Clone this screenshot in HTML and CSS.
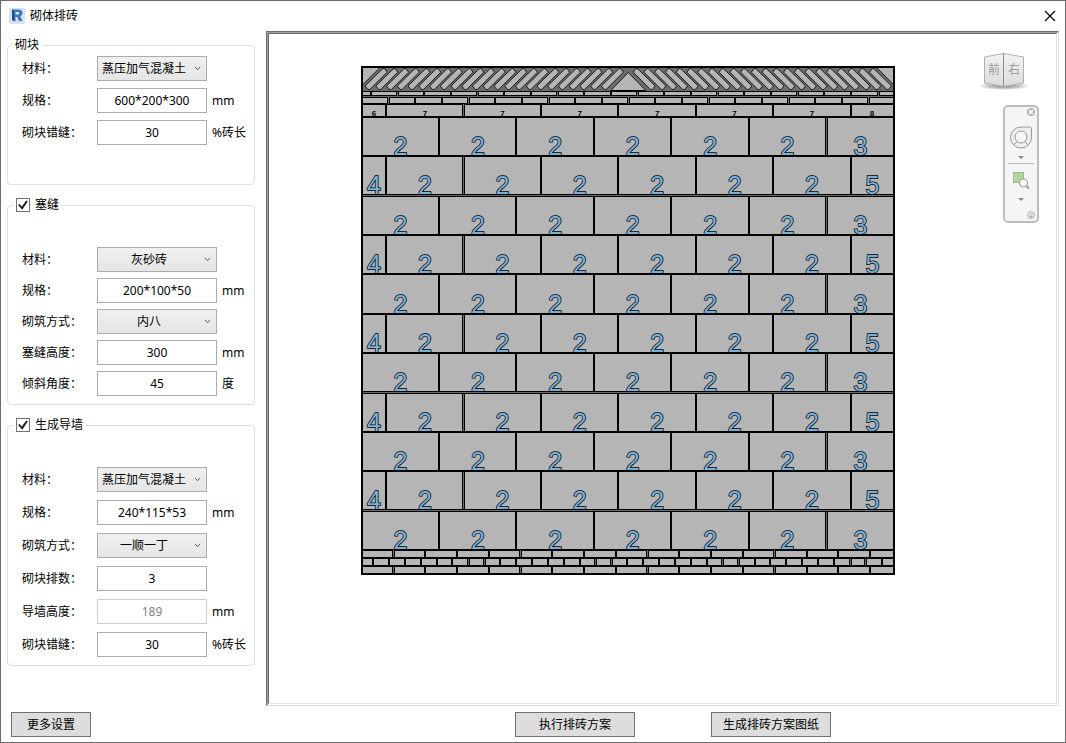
FILE: index.html
```html
<!DOCTYPE html>
<html lang="zh-CN">
<head>
<meta charset="utf-8">
<title>砌体排砖</title>
<link rel="stylesheet" href="styles.css">
</head>
<body>
<div class="window">
  <header class="titlebar">
    <svg class="app-icon" viewBox="0 0 16 16" aria-hidden="true">
      <rect width="16" height="16" rx="1" fill="#d3e3f3"/>
      <path d="M3 1.500h6.500c2.600 0 3.900 1.200 3.900 3.500 0 1.700-.8 2.800-2.200 3.300L13.500 13H10L8.200 9H6.500v4.500L3 12z" fill="#3d76b5"/>
      <path d="M3 1.500l2.200 1.300V13L3 12z" fill="#1f4b86"/>
      <path d="M6.500 4h2.400c.9 0 1.300.4 1.300 1.200S9.800 6.500 8.900 6.500H6.500z" fill="#d3e3f3"/>
    </svg>
    <h1 class="title">砌体排砖</h1>
    <button class="close" type="button" aria-label="关闭">
      <svg viewBox="0 0 12 12"><path d="M1 1l10 10M11 1L1 11" stroke="#000" stroke-width="1.2" fill="none"/></svg>
    </button>
  </header>

  <main class="main">
    <form class="sidebar">
      <fieldset class="group group-block">
        <legend>砌块</legend>
        <div class="row">
          <label for="b-mat">材料：</label>
          <span class="combo"><select id="b-mat"><option>蒸压加气混凝土</option></select><svg viewBox="0 0 7 5"><path d="M1 .8l2.500 3L6 .8"/></svg></span>
        </div>
        <div class="row">
          <label for="b-spec">规格：</label><input id="b-spec" type="text" value="600*200*300"><span class="unit">mm</span>
        </div>
        <div class="row">
          <label for="b-off">砌块错缝：</label><input id="b-off" type="text" value="30"><span class="unit">%砖长</span>
        </div>
      </fieldset>

      <fieldset class="group group-gap">
        <legend><label class="check"><input type="checkbox" checked>塞缝</label></legend>
        <div class="row">
          <label for="g-mat">材料：</label>
          <span class="combo"><select id="g-mat"><option>灰砂砖</option></select><svg viewBox="0 0 7 5"><path d="M1 .8l2.500 3L6 .8"/></svg></span>
        </div>
        <div class="row">
          <label for="g-spec">规格：</label><input id="g-spec" type="text" value="200*100*50"><span class="unit">mm</span>
        </div>
        <div class="row">
          <label for="g-way">砌筑方式：</label>
          <span class="combo"><select id="g-way"><option>内八</option></select><svg viewBox="0 0 7 5"><path d="M1 .8l2.500 3L6 .8"/></svg></span>
        </div>
        <div class="row">
          <label for="g-h">塞缝高度：</label><input id="g-h" type="text" value="300"><span class="unit">mm</span>
        </div>
        <div class="row">
          <label for="g-a">倾斜角度：</label><input id="g-a" type="text" value="45"><span class="unit">度</span>
        </div>
      </fieldset>

      <fieldset class="group group-base">
        <legend><label class="check"><input type="checkbox" checked>生成导墙</label></legend>
        <div class="row">
          <label for="w-mat">材料：</label>
          <span class="combo"><select id="w-mat"><option>蒸压加气混凝土</option></select><svg viewBox="0 0 7 5"><path d="M1 .8l2.500 3L6 .8"/></svg></span>
        </div>
        <div class="row">
          <label for="w-spec">规格：</label><input id="w-spec" type="text" value="240*115*53"><span class="unit">mm</span>
        </div>
        <div class="row">
          <label for="w-way">砌筑方式：</label>
          <span class="combo"><select id="w-way"><option>一顺一丁</option></select><svg viewBox="0 0 7 5"><path d="M1 .8l2.500 3L6 .8"/></svg></span>
        </div>
        <div class="row">
          <label for="w-n">砌块排数：</label><input id="w-n" type="text" value="3">
        </div>
        <div class="row">
          <label for="w-h">导墙高度：</label><input id="w-h" type="text" value="189" disabled><span class="unit">mm</span>
        </div>
        <div class="row">
          <label for="w-off">砌块错缝：</label><input id="w-off" type="text" value="30"><span class="unit">%砖长</span>
        </div>
      </fieldset>
    </form>

    <section class="viewport">
      <div class="canvas">
        <svg class="wall" id="wall" viewBox="361 66 534 509" role="img" aria-label="排砖立面"></svg>
        <div class="tools">
          <svg class="cube" viewBox="0 0 52 40" role="img" aria-label="视图方位">
            <defs>
              <linearGradient id="face" x1="0" y1="0" x2="0" y2="1"><stop offset="0" stop-color="#f2f2f2"/><stop offset="1" stop-color="#dcdcdc"/></linearGradient>
              <radialGradient id="shade"><stop offset="0" stop-color="#888"/><stop offset=".6" stop-color="#c4c4c4"/><stop offset="1" stop-color="#fff"/></radialGradient>
            </defs>
            <ellipse cx="26" cy="34" rx="26" ry="4" fill="url(#shade)"/>
            <path d="M6.500 5l19-3.500v33L6.500 31z" fill="url(#face)" stroke="#b0b0b0"/>
            <path d="M45.500 5l-20-3.500v33l20-3.500z" fill="url(#face)" stroke="#b0b0b0"/>
            <path d="M25.500 1.500v33" stroke="#8c8c8c"/>
            <text x="10" y="22">前</text><text x="30" y="22">右</text>
          </svg>
          <svg class="navbar" viewBox="0 0 36 118" role="img" aria-label="导航栏">
            <rect x="1" y="1" width="34" height="116" rx="4" fill="#f5f5f5" stroke="#bdbdbd" stroke-width="2"/>
            <circle cx="28" cy="7" r="4" fill="#b4b4b4"/>
            <path d="M26 5l4 4M30 5l-4 4" stroke="#fff" stroke-width="1.200"/>
            <path d="M18 22h8.500q2 0 2 2v8.500a10.500 10.500 0 1 1-10.500-10.500z" fill="#eceef2" stroke="#999"/>
            <circle cx="18" cy="32" r="6" fill="#f6f6f6" stroke="#999"/>
            <path d="M11.500 39.500l2.500-3M24.500 39.500l-2.500-3" stroke="#999"/>
            <path d="M15 51h6l-3 3z" fill="#8a8a8a"/>
            <path d="M5 58.500h26" stroke="#bdbdbd"/>
            <rect x="10.500" y="67.500" width="10" height="10" fill="#b3d39f" stroke="#9ab78a"/>
            <circle cx="20.500" cy="78" r="4" fill="#f8f8f8" stroke="#a3a3a3" stroke-width="1.200"/>
            <path d="M23.500 81l2.500 2.500" stroke="#999" stroke-width="1.800"/>
            <path d="M15 93h6l-3 3z" fill="#8a8a8a"/>
            <circle cx="28" cy="110" r="3.500" fill="#f2f2f2" stroke="#b4b4b4"/>
            <path d="M26 109h4M26.500 111h3l-1.500 1.500z" stroke="#aaa" fill="#aaa" stroke-width=".8"/>
          </svg>
        </div>
      </div>
    </section>
  </main>

  <footer class="footer">
    <div class="footer-side"><button class="btn" type="button">更多设置</button></div>
    <div class="footer-main">
      <button class="btn wide" type="button">执行排砖方案</button>
      <button class="btn wide" type="button">生成排砖方案图纸</button>
    </div>
  </footer>
</div>
<script src="wall.js"></script>
</body>
</html>
```
FILE: styles.css
```css
* { box-sizing: border-box; }
body {
  margin: 0;
  background: #fff;
  color: #000;
  font: 12px/16px "Noto Sans", "Noto Sans CJK SC", sans-serif;
}
input, select, button { font: inherit; color: inherit; margin: 0; }
svg { display: block; }

.window {
  min-height: 100vh;
  display: flex;
  flex-direction: column;
  border: 1px solid #6d6b6b;
}
.titlebar {
  display: flex;
  align-items: center;
  height: 30px;
  padding: 0 8px;
}
.app-icon { width: 16px; height: 16px; }
.title { margin: 0 0 0 5px; font-size: 12px; font-weight: 400; }
.close { margin-left: auto; padding: 0 1px; border: 0; background: none; }
.close svg { width: 12px; height: 12px; }

.main { flex: 1; display: flex; }
.sidebar {
  flex: none;
  width: 265px;
  padding: 6px 11px 0 6px;
  display: flex;
  flex-direction: column;
  gap: 12px;
}
.group {
  margin: 0;
  min-width: 0;
  border: 1px solid #d9e2e4;
  border-radius: 4px;
  display: flex;
  flex-direction: column;
}
.group legend { margin: 0 0 0 -9px; padding: 0 3px; height: 16px; line-height: 16px; }
.group-block legend { margin-left: -10px; }
.group-block { padding: 3px 0 39px 14px; gap: 7px; }
.group-gap { padding: 34px 0 8px 14px; gap: 6px; }
.group-base { padding: 34px 0 8px 14px; gap: 8px; }

.row {
  display: grid;
  grid-template-columns: 75px 110px auto;
  align-items: center;
  height: 25px;
}
.group-gap .row { grid-template-columns: 75px 120px auto; }
.unit { padding-left: 5px; white-space: nowrap; }
.row input {
  width: 100%;
  height: 25px;
  padding: 0;
  text-align: center;
  border: 1px solid #abadb3;
  background: #fff;
}
.row input:disabled { border-color: #cfcfd2; color: #838383; }
.combo { display: grid; align-items: center; }
.combo > * { grid-area: 1 / 1; }
.combo select {
  appearance: none;
  width: 100%;
  height: 25px;
  padding: 0 16px 0 0;
  text-align: center;
  text-align-last: center;
  border: 1px solid #acacac;
  border-radius: 0;
  background: linear-gradient(#f0f0f0, #e5e5e5);
}
.combo svg {
  justify-self: end;
  width: 7px;
  height: 5px;
  margin-right: 6px;
  fill: none;
  stroke: #606060;
  pointer-events: none;
}

.check { display: flex; align-items: center; gap: 5px; }
.check input {
  appearance: none;
  width: 14px;
  height: 14px;
  border: 1px solid #707070;
  background: #fff;
  display: grid;
  place-content: center;
}
.check input:checked::before {
  content: "";
  width: 10px;
  height: 10px;
  background: #212121;
  clip-path: polygon(0 50%, 15% 40%, 38% 66%, 82% 4%, 98% 14%, 42% 98%);
}

.viewport {
  flex: 1;
  padding: 1px;
  border: 1px solid;
  border-color: #6e6e6e #e0e0e0 #e0e0e0 #6e6e6e;
  box-shadow: inset 1px 1px #a0a0a0;
  margin: 0 6px 0 0;
}
.canvas {
  height: 100%;
  display: flex;
  align-items: flex-start;
  padding: 18px 17px 0 92px;
  border: 1px solid;
  border-color: #696969 #e3e3e3 #e3e3e3 #696969;
}
.wall { flex: 0 1 534px; min-width: 0; margin-top: 14px; }
.tools { margin-left: auto; display: flex; flex-direction: column; align-items: flex-end; gap: 13px; }
.cube { width: 52px; height: 40px; margin-right: 9px; }
.cube text { font-size: 12px; fill: #999; }
.navbar { width: 36px; height: 118px; }

.wall text { font-family: "Liberation Sans", sans-serif; text-anchor: middle; }
.wall .num {
  font-size: 25px;
  fill: #78b0dc;
  stroke: #000;
  stroke-width: 1.4;
  paint-order: stroke;
}
.wall .tiny { font-size: 8px; font-weight: 700; fill: #000; }

.footer { display: flex; align-items: flex-start; height: 36px; padding-top: 6px; }
.footer-side { width: 265px; padding-left: 10px; }
.footer-main {
  flex: 1;
  display: flex;
  justify-content: center;
  gap: 76px;
  padding-left: 15px;
}
.btn {
  width: 80px;
  height: 25px;
  padding: 0;
  border: 1px solid #707070;
  background: #ddd;
}
.btn.wide { width: 120px; }
```
FILE: wall.js
```js
const NS = "http://www.w3.org/2000/svg";
const wall = document.getElementById("wall");
const LEFT = 361, RIGHT = 895;
const BRICK = "#b5b5b5", JOINT = "#6c6c6c", LINE = "#000";

function add(name, attrs, text) {
  const el = document.createElementNS(NS, name);
  for (const key in attrs) el.setAttribute(key, attrs[key]);
  if (text) el.textContent = text;
  wall.appendChild(el);
}
function rect(x, y, width, height, fill) {
  add("rect", { x, y, width, height, fill, "shape-rendering": "crispEdges" });
}
function vline(x, y1, y2, open) {
  const h = y2 - y1;
  if (open) {
    rect(Math.floor(x) - 1, y1, 3, h, LINE);
    rect(Math.floor(x), y1, 1, h, JOINT);
  } else {
    rect(Math.floor(x + 0.4) - 1, y1, 2, h, LINE);
  }
}
function hline(y, open) {
  rect(LEFT, y, RIGHT - LEFT, open ? 3 : 2, LINE);
  if (open) rect(LEFT, y + 1, RIGHT - LEFT, 1, JOINT);
}
function series(start, pitch, y1, y2, isOpen) {
  for (let i = 0, x = start; x < RIGHT - 3; i++, x = start + i * pitch) {
    vline(x, y1, y2, isOpen(i));
  }
}
function shape(points) {
  add("polygon", { points, fill: BRICK, stroke: LINE, "stroke-width": 0.8 });
}

rect(LEFT, 66, RIGHT - LEFT, 509, BRICK);

// Slanted course under the beam, mirrored about the middle
const MID = 628.3;
rect(LEFT, 67, RIGHT - LEFT, 25, JOINT);
[1, -1].forEach(side => {
  const at = list => list.map(([x, y]) => `${MID + side * (x - MID)},${y}`).join(" ");
  shape(at([[361.5, 67.5], [380, 67.5], [361.5, 86]]));
  for (let i = 0; i < 23; i++) {
    const t = 384.3 + i * 10.74;
    shape(at([
      [t - 2, 69], [t, 68.4], [t + 2.8, 72.2],
      [t - 14.5, 89.6], [t - 16.4, 89.4], [t - 19.2, 86]
    ]));
  }
});
shape(`${MID},72.5 ${MID + 18},91 ${MID - 18},91`);

// Two thin courses
rect(LEFT, 91, RIGHT - LEFT, 1, LINE);
rect(LEFT, 92, RIGHT - LEFT, 3, BRICK);
rect(MID - 17, 90, 34, 2, LINE);
rect(LEFT, 95, RIGHT - LEFT, 1, LINE);
rect(LEFT, 96, RIGHT - LEFT, 1, JOINT);
rect(LEFT, 97, RIGHT - LEFT, 1, LINE);
hline(103, false);
series(370.7, 26.7, 92, 96, i => i % 3 === 1);
series(388.3, 26.7, 97, 104, i => i % 3 === 0);

// Levelling course
const B_JOINTS = i => i === 1;
series(386, 77.5, 104, 117, B_JOINTS);
add("text", { x: 374, y: 116, class: "tiny" }, "6");
for (let i = 0; i < 6; i++) add("text", { x: 425 + i * 77.4, y: 116, class: "tiny" }, "7");
add("text", { x: 872, y: 116, class: "tiny" }, "8");

// Block courses
const tops = [116, 155, 194, 234, 273, 313, 352, 391, 431, 470, 509, 549];
const openTops = [194, 391, 509];
for (let r = 0; r < 11; r++) {
  const y1 = tops[r], y2 = tops[r + 1];
  if (r % 2 === 0) series(439, 77.5, y1, y2, i => i === 5);
  else series(386, 77.5, y1, y2, B_JOINTS);
}
tops.forEach(y => hline(y, openTops.includes(y)));
for (let r = 0; r < 11; r++) {
  const y = tops[r + 1] - 0.5;
  const start = r % 2 === 0 ? 400.5 : 425;
  for (let i = 0; i < 6; i++) add("text", { x: start + i * 77.4, y, class: "num" }, "2");
  if (r % 2 === 0) {
    add("text", { x: 860.5, y, class: "num" }, "3");
  } else {
    add("text", { x: 374, y, class: "num" }, "4");
    add("text", { x: 872.5, y, class: "num" }, "5");
  }
}

// Guide wall: stretcher, header, stretcher
series(393.3, 31.8, 550, 558, i => i % 4 === 0);
series(373, 15.9, 558, 566, i => i % 8 > 5);
series(393.3, 31.8, 566, 574, i => i % 4 === 0);
hline(557, false);
hline(565, false);

// Outline
rect(LEFT, 66, RIGHT - LEFT, 2, LINE);
rect(LEFT, 573, RIGHT - LEFT, 2, LINE);
rect(LEFT, 66, 2, 509, LINE);
rect(RIGHT - 2, 66, 2, 509, LINE);
```
